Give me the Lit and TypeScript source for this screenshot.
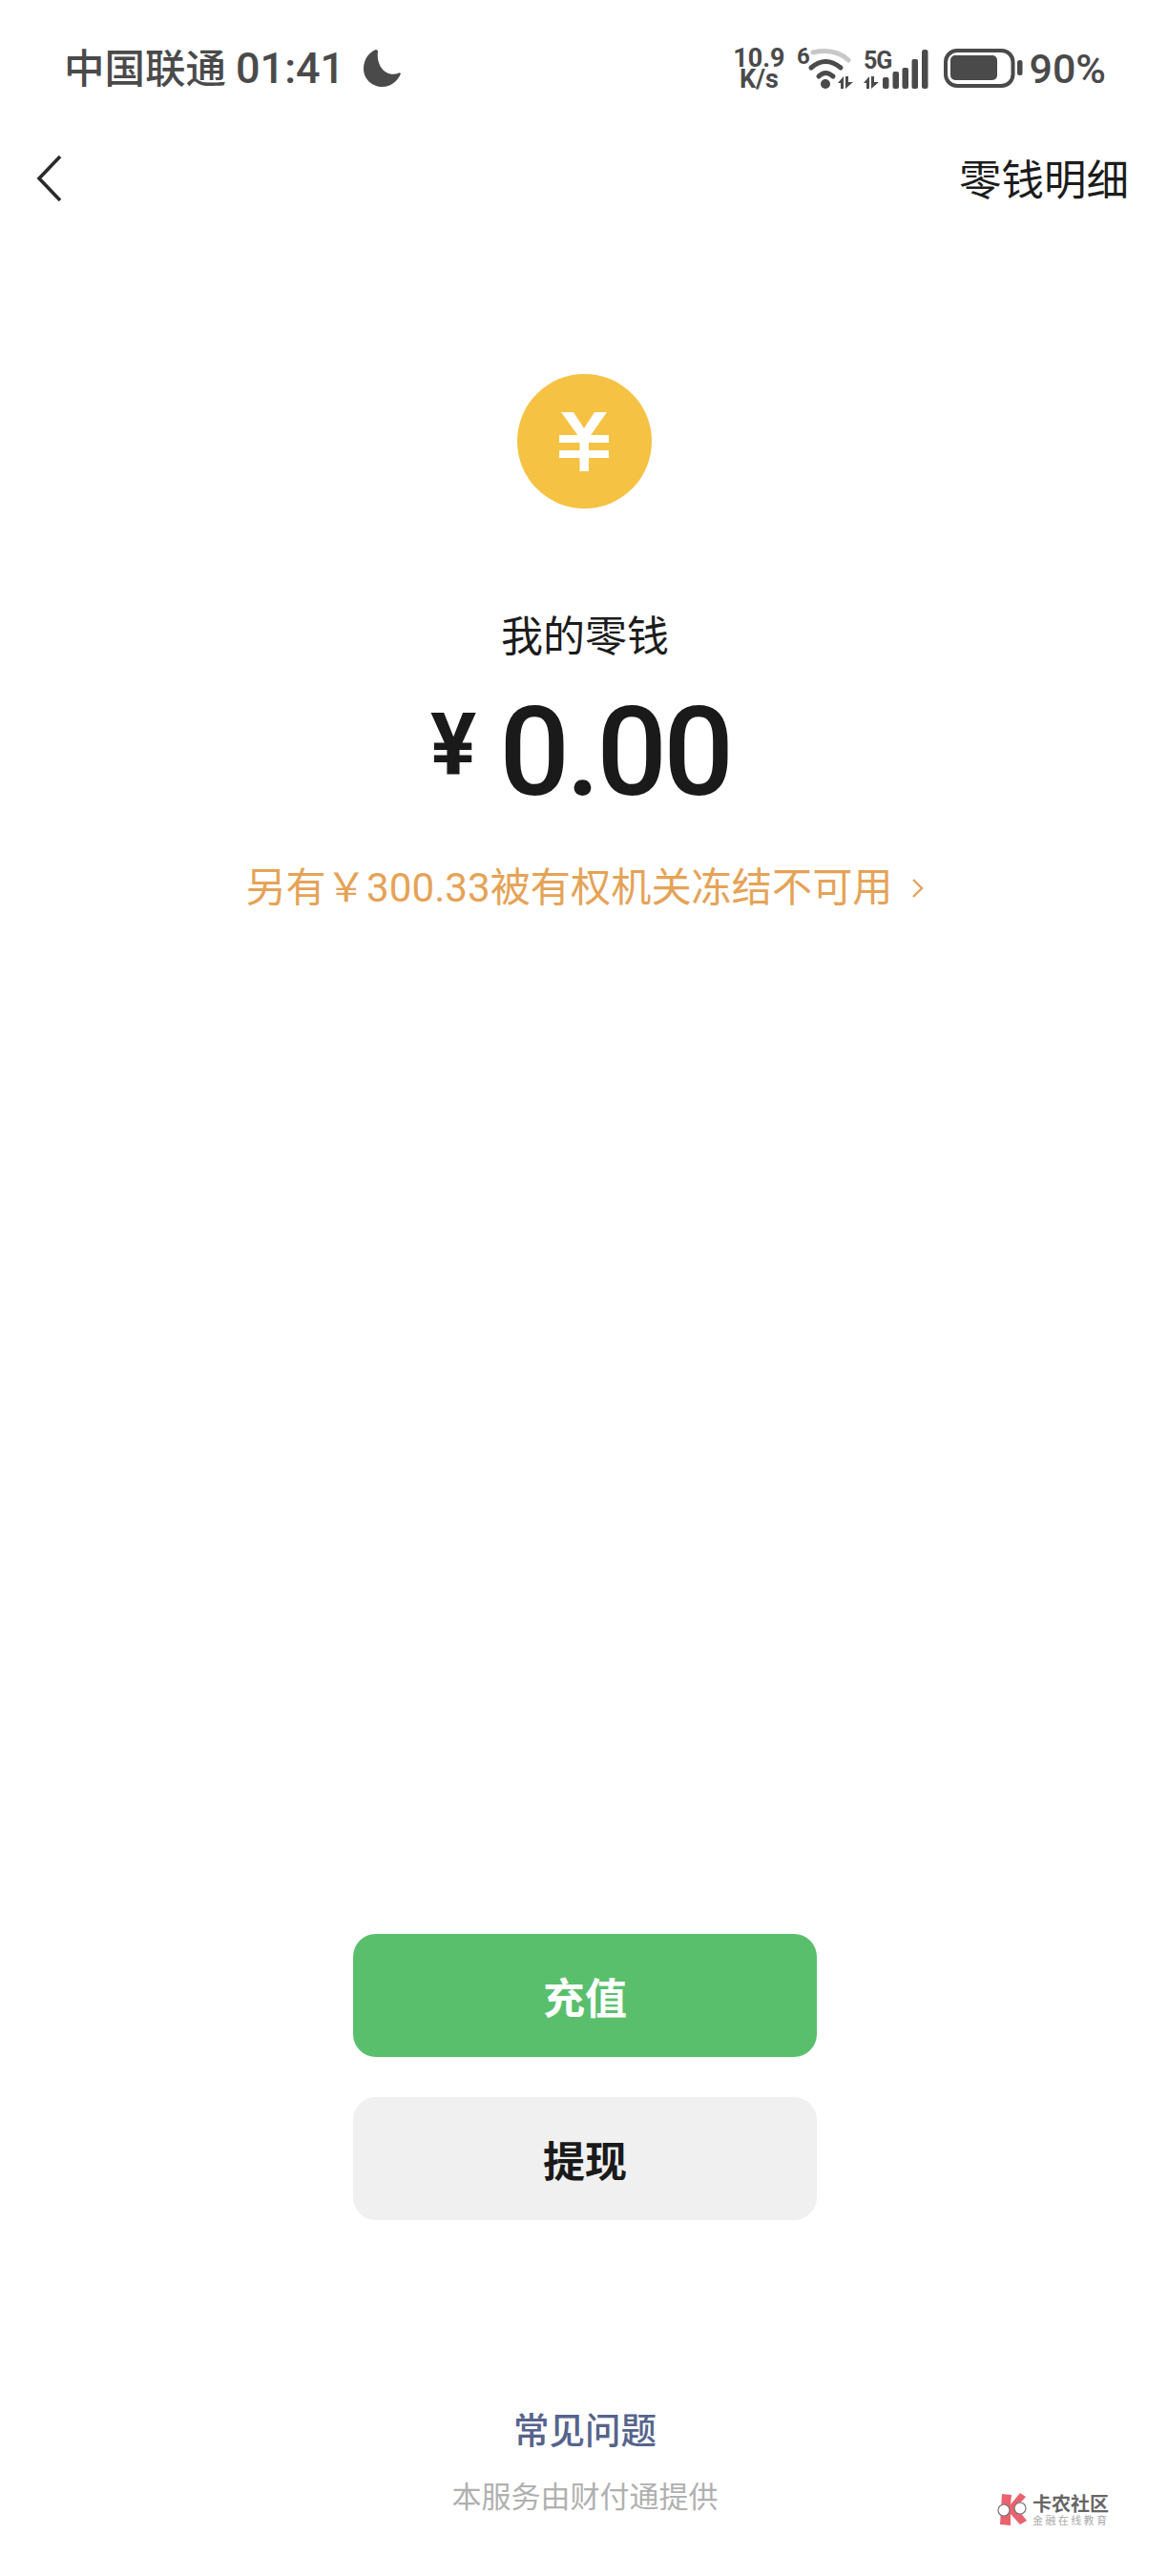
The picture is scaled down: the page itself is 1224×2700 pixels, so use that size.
import { LitElement, html, css } from 'lit';
import { customElement } from 'lit/decorators.js';

@customElement('app-root')
export class AppRoot extends LitElement {
  static styles = css`
    :host {
      display: block;
      background: #fff;
      font-family: Roboto, 'Noto Sans CJK SC', sans-serif;
      color: #1c1c1c;
    }

    svg {
      display: block;
    }

    .page {
      position: relative;
      display: flex;
      flex-direction: column;
      align-items: center;
      width: 1224px;
      height: 2700px;
      overflow: hidden;
    }

    /* status bar */
    .status {
      align-self: stretch;
      display: flex;
      align-items: center;
      height: 144px;
      padding: 0 65px 0 67px;
      color: #4a4a4a;
      font-weight: 500;
    }

    .carrier {
      font-size: 42.5px;
      line-height: 50px;
      white-space: nowrap;
    }

    .clock {
      margin-left: 10px;
      font-size: 45px;
    }

    .moon {
      margin-left: 20px;
      margin-top: -1px;
    }

    .indicators {
      margin-left: auto;
      display: flex;
      align-items: center;
    }

    .speed {
      width: 58px;
      margin-right: 10px;
      font-size: 27px;
      line-height: 22px;
      font-weight: 700;
      text-align: center;
    }

    .speed span {
      display: block;
    }

    .percent {
      margin-left: 6px;
      font-size: 43px;
      line-height: 50px;
    }

    /* nav row */
    .nav {
      align-self: stretch;
      display: flex;
      align-items: center;
      justify-content: space-between;
      height: 86px;
      padding: 0 41px 0 38px;
    }

    .nav-title {
      font-size: 44.5px;
      line-height: 60px;
      margin-top: 6px;
    }

    /* balance */
    .coin {
      display: flex;
      align-items: center;
      justify-content: center;
      width: 141px;
      height: 141px;
      margin-top: 162px;
      border-radius: 50%;
      background: #f5c243;
    }

    .label {
      margin-top: 105px;
      margin-left: 2px;
      font-size: 44px;
      line-height: 60px;
    }

    .amount {
      display: flex;
      align-items: flex-start;
      margin-top: 25px;
      margin-left: -8px;
      height: 132px;
      font-size: 130px;
      line-height: 132px;
      letter-spacing: -4px;
      font-weight: 500;
      color: #1a1a1a;
    }

    .amount .yen {
      font-size: 90px;
      line-height: 118px;
      letter-spacing: 0;
      font-weight: 700;
      margin-right: 24px;
    }

    .notice {
      display: flex;
      align-items: center;
      gap: 19px;
      margin-top: 46px;
      margin-left: 2px;
      font-size: 42.2px;
      line-height: 60px;
      color: #e5a357;
    }

    /* buttons */
    .actions {
      display: flex;
      flex-direction: column;
      gap: 42px;
      margin-top: auto;
      margin-left: 2px;
    }

    .btn {
      width: 486px;
      height: 129px;
      border: 0;
      border-radius: 24px;
      font-family: inherit;
      font-size: 44px;
      font-weight: 700;
      padding: 0;
    }

    .btn.primary {
      background: #5abf6c;
      color: #fff;
    }

    .btn.secondary {
      background: #f0f0f0;
      color: #1a1a1a;
    }

    /* footer */
    .faq {
      margin-top: 196px;
      margin-left: 2px;
      font-size: 37.5px;
      line-height: 50px;
      font-weight: 500;
      color: #56648c;
    }

    .provider {
      margin-top: 25px;
      margin-bottom: 62px;
      margin-left: 2px;
      font-size: 31px;
      line-height: 40px;
      color: #b0b0b0;
    }

    /* forum watermark sits over the page */
    .watermark {
      position: absolute;
      left: 1045px;
      top: 2613px;
      display: flex;
      gap: 5px;
    }

    .wm-name {
      margin-top: 1px;
      font-size: 20px;
      line-height: 22px;
      font-weight: 700;
      color: #666;
      white-space: nowrap;
    }

    .wm-sub {
      font-size: 11px;
      line-height: 13px;
      letter-spacing: 2.4px;
      color: #aaa;
      white-space: nowrap;
    }
  `;

  render() {
    return html`<div class="page">
      <div class="status">
        <div class="carrier">中国联通<span class="clock">01:41</span></div>
        <svg class="moon" width="39" height="39" viewBox="0 0 39 39" fill="#4a4a4a">
          <path d="M13 0C5 3 0 11 0 20C0 31 9 39 20 39C28 39 36 33 39 25C38 24 37 24 36 25C24 29 13 18 15 2C15 1 14 0 13 0Z" />
        </svg>
        <div class="indicators">
          <div class="speed"><span>10.9</span><span>K/s</span></div>
          <svg width="60" height="64" viewBox="834 39 60 64" fill="#4a4a4a">
            <text x="835" y="66" font-size="24" font-weight="700" font-family="Roboto">6</text>
            <g fill="none" stroke-linecap="round">
              <path d="M852 54Q875 49 889 62" stroke="#c8c8c8" stroke-width="5" />
              <path d="M850 70Q865 57 881 70" stroke="#4a4a4a" stroke-width="5" />
              <path d="M858 79Q865 72 873 79" stroke="#4a4a4a" stroke-width="5" />
            </g>
            <circle cx="865" cy="87" r="5" />
            <path d="M878 86L884 79V92H881V86ZM886 79H889V85H894L886 92Z" />
          </svg>
          <svg style="margin-left:11px" width="69" height="55" viewBox="905 44 69 55" fill="#4a4a4a">
            <text x="905" y="71" font-size="25" font-weight="700" font-family="Roboto" letter-spacing="-1">5G</text>
            <path d="M905 86L911 79V92H908V86ZM913 79H916V85H921L913 92Z" />
            <rect x="925" y="80" width="6.5" height="12" rx="2" />
            <rect x="935.5" y="74" width="6.5" height="18" rx="2" />
            <rect x="945.5" y="70" width="6.5" height="22" rx="2" />
            <rect x="955.5" y="61" width="6.5" height="31" rx="2" />
            <rect x="966" y="51" width="6.5" height="41" rx="2.5" />
          </svg>
          <svg style="margin-left:15px" width="83" height="42" viewBox="990 51 83 42" fill="#4a4a4a">
            <rect x="992" y="53" width="70.5" height="37" rx="12" fill="none" stroke="#4a4a4a" stroke-width="4" />
            <rect x="997" y="58" width="49" height="26" rx="5" />
            <rect x="1067" y="63" width="5.5" height="16" rx="2.5" />
          </svg>
          <span class="percent">90%</span>
        </div>
      </div>

      <div class="nav">
        <svg width="28" height="50" viewBox="0 0 28 50" fill="none" stroke="#2a2a2a" stroke-width="3.6">
          <path d="M25 2L3 25L25 48" />
        </svg>
        <span class="nav-title">零钱明细</span>
      </div>

      <div class="coin">
        <svg width="52" height="62" viewBox="0 0 52 62" fill="#fff">
          <path d="M2 0H15L26 17L37 0H50L31 27V62H21.5V27Z" />
          <rect x="0" y="24" width="52" height="8" />
          <rect x="0" y="40" width="52" height="8" />
        </svg>
      </div>

      <div class="label">我的零钱</div>
      <div class="amount"><span class="yen">¥</span>0.00</div>
      <div class="notice">
        <span>另有￥300.33被有权机关冻结不可用</span>
        <svg width="14" height="20" viewBox="0 0 14 20" fill="none" stroke="#e5a357" stroke-width="2.4">
          <path d="M2 1L11 10L2 19" />
        </svg>
      </div>

      <div class="actions">
        <button class="btn primary">充值</button>
        <button class="btn secondary">提现</button>
      </div>

      <div class="faq">常见问题</div>
      <div class="provider">本服务由财付通提供</div>

      <div class="watermark">
        <svg width="32" height="34" viewBox="0 0 32 34">
          <path d="M5 1L15 2L14 12L24 0L30 4L20 15L31 29L24 33L14 22L14 34L3 33Z" fill="#e9626e" />
          <circle cx="7" cy="18" r="6" fill="#fff" stroke="#777" stroke-width="1.2" />
          <circle cx="24" cy="16" r="6" fill="#fff" stroke="#777" stroke-width="1.2" />
        </svg>
        <div>
          <div class="wm-name">卡农社区</div>
          <div class="wm-sub">金融在线教育</div>
        </div>
      </div>
    </div>`;
  }
}
